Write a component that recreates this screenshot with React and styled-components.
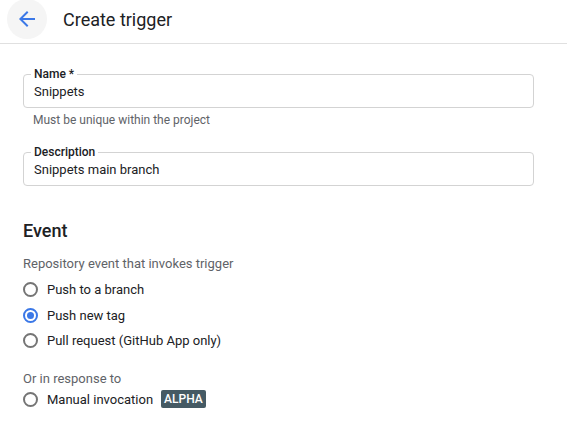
import React from "react";
import styled, { createGlobalStyle } from "styled-components";

const GlobalStyle = createGlobalStyle`
  body {
    margin: 0;
    background: #ffffff;
    font-family: Roboto, "Liberation Sans", Arial, sans-serif;
    color: #202124;
  }
`;

const Page = styled.div`
  width: 567px;
  height: 425px;
  overflow: hidden;
  background: #fff;
`;

const Header = styled.header`
  display: flex;
  align-items: center;
  height: 43px;
  border-bottom: 1px solid #e0e0e0;
  padding-left: 7px;
  box-sizing: content-box;
`;

const BackButton = styled.button`
  width: 40px;
  height: 40px;
  margin-top: -5px;
  border: none;
  border-radius: 50%;
  background: #f5f5f5;
  display: flex;
  align-items: center;
  justify-content: center;
  padding: 0;
  cursor: pointer;
`;

const Title = styled.h1`
  margin: -5px 0 0 16px;
  font-size: 18px;
  font-weight: 400;
  color: #202124;
`;

const Form = styled.div`
  padding: 30px 33px 0 23px;
`;

const FieldBox = styled.div`
  position: relative;
  height: 34px;
  border: 1px solid #d3d3d3;
  border-radius: 4px;
  box-sizing: border-box;
  display: flex;
  align-items: center;
  padding: 0 10px;
  font-size: 13px;
  color: #202124;
  margin-top: ${(p) => p.$top || 0}px;
`;

const FieldLabel = styled.span`
  position: absolute;
  top: -8px;
  left: 7px;
  padding: 0 3px;
  background: #fff;
  font-size: 12px;
  font-weight: 500;
  line-height: 14px;
  color: #202124;
`;

const Helper = styled.div`
  padding: 4px 0 0 10px;
  font-size: 12px;
  line-height: 16px;
  color: #5f6368;
`;

const SectionTitle = styled.h2`
  margin: 34px 0 0;
  font-size: 18px;
  font-weight: 500;
  line-height: 22px;
  color: #202124;
`;

const Caption = styled.div`
  margin-top: ${(p) => p.$top || 0}px;
  font-size: 13px;
  line-height: 18px;
  color: #5f6368;
`;

const RadioList = styled.div`
  display: flex;
  flex-direction: column;
  margin-top: ${(p) => p.$top || 0}px;
`;

const RadioRow = styled.label`
  display: flex;
  align-items: center;
  height: 25.5px;
  font-size: 13px;
  color: #202124;
  cursor: pointer;
`;

const RadioCircle = styled.span`
  width: 15px;
  height: 15px;
  margin-right: 9px;
  border-radius: 50%;
  box-sizing: border-box;
  border: 2px solid ${(p) => (p.$checked ? "#3b78e7" : "#757575")};
  display: flex;
  align-items: center;
  justify-content: center;

  &::after {
    content: "";
    width: 7px;
    height: 7px;
    border-radius: 50%;
    background: ${(p) => (p.$checked ? "#3b78e7" : "transparent")};
  }
`;

const Badge = styled.span`
  margin-left: 8px;
  padding: 0 3px;
  height: 18px;
  line-height: 18px;
  border-radius: 2px;
  background: #455a64;
  color: #fff;
  font-size: 12px;
  font-weight: 500;
`;

const Radio = ({ checked, children }) => (
  <RadioRow>
    <RadioCircle $checked={checked} />
    {children}
  </RadioRow>
);

export default function App() {
  return (
    <Page>
      <GlobalStyle />
      <Header>
        <BackButton aria-label="Back">
          <svg width="24" height="24" viewBox="0 0 24 24">
            <path
              fill="#3b78e7"
              d="M20 11H7.83l5.59-5.59L12 4l-8 8 8 8 1.41-1.41L7.83 13H20v-2z"
            />
          </svg>
        </BackButton>
        <Title>Create trigger</Title>
      </Header>
      <Form>
        <FieldBox>
          <FieldLabel>Name *</FieldLabel>
          Snippets
        </FieldBox>
        <Helper>Must be unique within the project</Helper>
        <FieldBox $top={24}>
          <FieldLabel>Description</FieldLabel>
          Snippets main branch
        </FieldBox>

        <SectionTitle>Event</SectionTitle>
        <Caption $top={13}>Repository event that invokes trigger</Caption>
        <RadioList $top={4}>
          <Radio>Push to a branch</Radio>
          <Radio checked>Push new tag</Radio>
          <Radio>Pull request (GitHub App only)</Radio>
        </RadioList>
        <Caption $top={16}>Or in response to</Caption>
        <RadioList $top={-1}>
          <Radio>
            Manual invocation <Badge>ALPHA</Badge>
          </Radio>
        </RadioList>
      </Form>
    </Page>
  );
}
